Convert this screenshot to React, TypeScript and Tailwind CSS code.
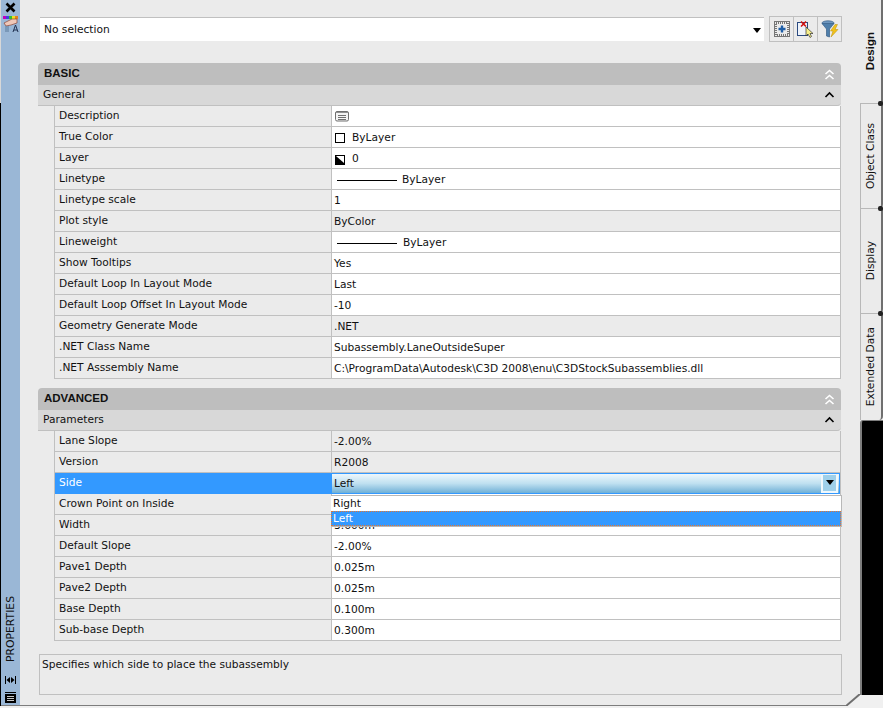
import React from "react";

const font = "[font-family:'DejaVu_Sans',sans-serif]";
const boldFont = "[font-family:'Liberation_Sans',sans-serif] font-bold text-[11.5px]";

function Chevrons({ double, white }: { double?: boolean; white?: boolean }) {
  const c = white ? "#ffffff" : "#000000";
  return (
    <svg width="11" height="11" viewBox="0 0 11 11" fill="none" stroke={c} strokeWidth="1.6">
      {double ? (
        <>
          <path d="M1.5 5 L5.5 1.5 L9.5 5" />
          <path d="M1.5 10 L5.5 6.5 L9.5 10" />
        </>
      ) : (
        <path d="M1.5 7 L5.5 3 L9.5 7" />
      )}
    </svg>
  );
}

type RowT = { n: string; v: React.ReactNode; ro?: boolean };

function Row({ n, v, ro }: RowT) {
  return (
    <div className="flex h-[21px] border-b border-[#c0c0c0]">
      <div className="w-[277px] shrink-0 border-r border-[#c0c0c0] pl-[4px] leading-[19px] text-[#111]">{n}</div>
      <div className={`flex-1 pl-[2px] leading-[22px] text-[#111] ${ro ? "bg-[#ebebeb]" : "bg-white"}`}>{v}</div>
    </div>
  );
}

function Line({ label, wide }: { label: string; wide?: boolean }) {
  return (
    <div className="flex items-center pl-[3px]">
      <div className="h-px w-[60px] bg-black" />
      <span className={wide ? "ml-[6px]" : "ml-[5px]"}>{label}</span>
    </div>
  );
}

function SectionHead({ title, sub }: { title: string; sub: string }) {
  return (
    <>
      <div className="flex h-[22px] items-center justify-between rounded-tl-[4px] rounded-tr-[4px] bg-[#bebebe] pl-[6px] pr-[6px]">
        <span className={`${boldFont} text-[#111]`}>{title}</span>
        <Chevrons double white />
      </div>
      <div className="flex h-[21px] items-center justify-between rounded-br-[4px] border-b border-[#c0c0c0] bg-[#d8d8d8] pl-[5px] pr-[6px]">
        <span className="text-[#111]">{sub}</span>
        <Chevrons />
      </div>
    </>
  );
}

const basic: RowT[] = [
  {
    n: "Description",
    v: (
      <svg width="14" height="11" viewBox="0 0 14 11" className="ml-[1px] mt-[5px]" fill="none">
        <rect x="0.5" y="0.5" width="13" height="9.5" rx="1.5" stroke="#707070" fill="#f4f4f4" />
        <path d="M1 1.5h12" stroke="#909090" />
        <path d="M3 4.5h8M3 6.5h8M3 8.5h8" stroke="#707070" />
      </svg>
    ),
  },
  {
    n: "True Color",
    v: (
      <div className="flex items-center pl-[1px]">
        <div className="h-[10px] w-[10px] border border-black bg-white" />
        <span className="ml-[7px]">ByLayer</span>
      </div>
    ),
  },
  {
    n: "Layer",
    v: (
      <div className="flex items-center pl-[1px]">
        <svg width="10" height="10" viewBox="0 0 10 10" className="mt-[1px]">
          <rect width="10" height="10" fill="#000" />
          <path d="M1 1 L9 1 L9 8 Z" fill="#fff" />
        </svg>
        <span className="ml-[7px]">0</span>
      </div>
    ),
  },
  { n: "Linetype", v: <Line label="ByLayer" /> },
  { n: "Linetype scale", v: "1" },
  { n: "Plot style", v: "ByColor", ro: true },
  { n: "Lineweight", v: <Line label="ByLayer" wide /> },
  { n: "Show Tooltips", v: "Yes" },
  { n: "Default Loop In Layout Mode", v: "Last" },
  { n: "Default Loop Offset In Layout Mode", v: "-10" },
  { n: "Geometry Generate Mode", v: ".NET", ro: true },
  { n: ".NET Class Name", v: "Subassembly.LaneOutsideSuper" },
  { n: ".NET Asssembly Name", v: "C:\\ProgramData\\Autodesk\\C3D 2008\\enu\\C3DStockSubassemblies.dll" },
];

const before: RowT[] = [
  { n: "Lane Slope", v: "-2.00%", ro: true },
  { n: "Version", v: "R2008", ro: true },
];
const after: RowT[] = [
  { n: "Default Slope", v: "-2.00%" },
  { n: "Pave1 Depth", v: "0.025m" },
  { n: "Pave2 Depth", v: "0.025m" },
  { n: "Base Depth", v: "0.100m" },
  { n: "Sub-base Depth", v: "0.300m" },
];

function Tab({ label, h, active, notch }: { label: string; h: string; active?: boolean; notch?: boolean }) {
  return (
    <div
      className={`${h} relative flex items-center justify-center border-r-2 border-[#6f6f6f] bg-[#ebebeb] ${
        active ? "" : "rounded-br-[4px] border-l border-t border-l-[#b8b8b8] border-t-[#b8b8b8]"
      }`}
    >
      <span className={`rotate-180 text-[#111] [writing-mode:vertical-rl] ${active ? boldFont : ""}`}>{label}</span>
      {notch && <div className="absolute bottom-[-3px] right-[-2px] z-10 h-[5px] w-[5px] rounded-[2px] bg-[#222]" />}
    </div>
  );
}

export default function App() {
  return (
    <div className={`${font} h-[708px] w-[883px] overflow-hidden bg-[#f0f0f0] text-[10.65px]`}>
      <div className="flex h-[706px]">
        {/* window edge */}
        <div className="flex w-px shrink-0 flex-col bg-black">
          <div className="h-[103px] bg-[#d8d8d8]" />
        </div>

        {/* left title strip */}
        <div className="flex w-[19px] shrink-0 flex-col items-center border-b border-[#7d7d7d] bg-[#9ab7d6]">
          <svg width="11" height="11" viewBox="0 0 11 11" className="mt-[2px]" stroke="#000" strokeWidth="2.6">
            <path d="M1.5 1.5 L9.5 9.5 M9.5 1.5 L1.5 9.5" />
          </svg>
          <svg width="17" height="17" viewBox="0 0 17 17" className="mt-[3px]">
            <rect x="1" y="0" width="3" height="3" fill="#c000c0" />
            <rect x="4" y="0" width="3" height="3" fill="#4040e0" />
            <rect x="7" y="0" width="3" height="3" fill="#30c030" />
            <rect x="10" y="0" width="3" height="3" fill="#f0e020" />
            <rect x="13" y="0" width="3" height="3" fill="#e08020" />
            <path d="M2 7 L10 3 L15 3 L15 7 L9 9 L4 10 Z" fill="#f0c8b8" stroke="#803020" strokeWidth="0.6" />
            <path d="M3 11 H7 M3 13 H7 M3 15 H7" stroke="#5a7a9a" strokeWidth="1" />
            <path d="M11 16 L13.5 9 L16 16 M12 14 H15" stroke="#203050" strokeWidth="1" fill="none" />
          </svg>
          <div className="mt-auto flex flex-col items-center pb-[2px]">
            <span className="rotate-180 text-[10.8px] leading-[13px] text-[#111] [writing-mode:vertical-rl]">PROPERTIES</span>
            <svg width="11" height="8" viewBox="0 0 11 8" className="mt-[14px]">
              <path d="M0.5 0 V8 M10.5 0 V8" stroke="#000" />
              <path d="M5 1 V7 L1.5 4 Z M6 1 V7 L9.5 4 Z" fill="#000" />
            </svg>
            <svg width="11" height="11" viewBox="0 0 11 11" className="mt-[8px]">
              <rect width="11" height="1" fill="#000" />
              <rect y="2" width="11" height="9" fill="#000" />
              <path d="M2 4.5H9M2 6.5H9M2 8.5H9" stroke="#c8c8c8" />
            </svg>
          </div>
        </div>

        {/* main panel */}
        <div className="relative flex w-[840px] shrink-0 flex-col border-b border-[#7d7d7d] bg-[#ebebeb] pl-[18px] pr-[19px]">
          <div className="mt-[16px] flex h-[26px] items-center pl-[2px]">
            <div className="flex h-[24px] w-[724px] shrink-0 items-center justify-between border-t border-[#c0c0c0] bg-white pl-[4px] pr-[3px] pt-[1px] text-[#111]">
              <span>No selection</span>
              <svg width="8" height="5" viewBox="0 0 8 5">
                <path d="M0 0H8L4 5Z" fill="#000" />
              </svg>
            </div>
            <div className="ml-[5px] flex h-[26px] w-[73px] shrink-0 border border-[#c0c0c0]">
              <div className="flex flex-1 items-center justify-center border-r border-[#c0c0c0]">
                <svg width="16" height="16" viewBox="0 0 16 16">
                  <rect x="0.5" y="0.5" width="15" height="15" fill="none" stroke="#000" strokeDasharray="1 1" />
                  <rect x="2" y="2" width="12" height="12" fill="none" stroke="#000" strokeDasharray="1 1" />
                  <path d="M8 4.5V11.5M4.5 8H11.5" stroke="#1f5fa8" strokeWidth="2.4" />
                </svg>
              </div>
              <div className="flex flex-1 items-center justify-center border-r border-[#c0c0c0]">
                <svg width="17" height="17" viewBox="0 0 17 17">
                  <rect x="0.5" y="1.5" width="10" height="13" fill="#eef3fa" stroke="#2a4a80" />
                  <path d="M4 0.5 L9 5.5 M9 0.5 L4 5.5" stroke="#d01010" strokeWidth="1.5" />
                  <path d="M9 6 V15 L11 13 L13 16.5 L14.5 15.5 L13 12.5 L16 12.5 Z" fill="#f6ef8a" stroke="#333" strokeWidth="0.7" />
                </svg>
              </div>
              <div className="flex flex-1 items-center justify-center">
                <svg width="18" height="18" viewBox="0 0 18 18">
                  <ellipse cx="7" cy="3" rx="6" ry="2.2" fill="#6f98c0" stroke="#3a6088" strokeWidth="0.7" />
                  <path d="M1 3.5 L5.5 9 V16 L8.5 17 V9 L13 3.5 Z" fill="#4f7fab" stroke="#3a6088" strokeWidth="0.7" />
                  <path d="M14 4.5 L9.5 11 H12 L10 17 L17 9.5 H14 L16.5 4.5 Z" fill="#f2c21a" stroke="#b8900e" strokeWidth="0.5" />
                </svg>
              </div>
            </div>
          </div>

          <div className="mt-[21px]">
            <SectionHead title="BASIC" sub="General" />
            <div className="ml-[16px] border-l border-r border-[#c0c0c0]">
              {basic.map((r) => (
                <Row key={r.n} {...r} />
              ))}
            </div>
          </div>

          <div className="mt-[9px]">
            <SectionHead title="ADVANCED" sub="Parameters" />
            <div className="relative ml-[16px] border-l border-r border-[#c0c0c0]">
              {before.map((r) => (
                <Row key={r.n} {...r} />
              ))}
              {/* selected row */}
              <div className="flex h-[21px]">
                <div className="w-[277px] shrink-0 bg-[#3399ff] pl-[4px] leading-[19px] text-white">Side</div>
                <div className="flex flex-1 items-center justify-between border-y border-r border-[#3399ff] bg-gradient-to-b from-[#eef7fc] via-[#bfe0f0] to-[#6fb0d6] pl-[2px] pr-[1px] text-[#111]">
                  <span>Left</span>
                  <div className="flex h-[18px] w-[17px] items-center justify-center border-x-2 border-b-2 border-[#f0f8fc] bg-[#9fd0ea]">
                    <svg width="8" height="5" viewBox="0 0 8 5">
                      <path d="M0 0H8L4 5Z" fill="#000" />
                    </svg>
                  </div>
                </div>
              </div>
              <Row n="Crown Point on Inside" v="" />
              <Row n="Width" v="3.600m" />
              {after.map((r) => (
                <Row key={r.n} {...r} />
              ))}
              {/* dropdown list */}
              <div className="absolute left-[276px] top-[64px] w-[511px] border-t border-b border-r border-[#b8b8b8] bg-white leading-[15px] text-[#111]">
                <div className="h-[15px] pl-[2px]">Right</div>
                <div className="h-[15px] border border-dotted border-[#e8762c] bg-[#3399ff] pl-[1px] leading-[13px] text-white">Left</div>
              </div>
            </div>
          </div>

          <div className="ml-[1px] mt-[13px] h-[41px] w-[803px] shrink-0 border border-[#c0c0c0] pl-[2px] pt-[2px] text-[#111]">
            Specifies which side to place the subassembly
          </div>

          {/* cut corner of the panel */}
          <svg width="14" height="12" viewBox="0 0 14 12" className="absolute bottom-[-1px] right-[0px]">
            <path d="M0 12 L14 12 L14 0 Z" fill="#f0f0f0" />
            <path d="M0 12 L14 0" stroke="#6f6f6f" strokeWidth="2" />
          </svg>
        </div>

        {/* tabs */}
        <div className="flex w-[23px] shrink-0 flex-col">
          <Tab label="Design" h="h-[103px]" active notch />
          <Tab label="Object Class" h="h-[105px]" notch />
          <Tab label="Display" h="h-[105px]" notch />
          <Tab label="Extended Data" h="h-[107px]" />
          <div className="flex-1 rounded-tl-[3px] border-l-2 border-t border-[#7d7d7d] bg-black" />
          <div className="h-[11px]" />
        </div>
      </div>
    </div>
  );
}
